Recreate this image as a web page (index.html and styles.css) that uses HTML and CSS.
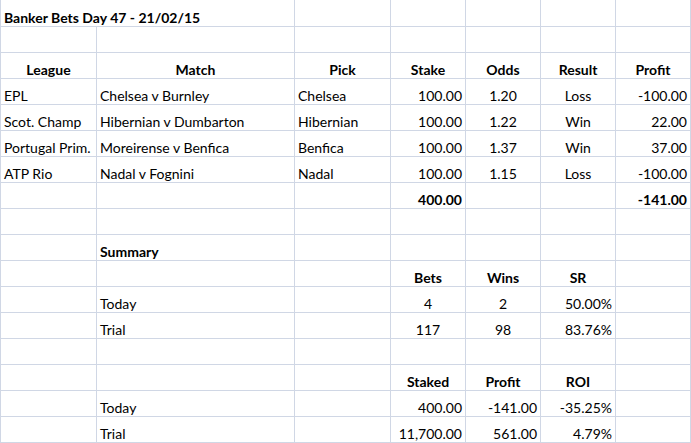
FILE: index.html
```html
<!DOCTYPE html>
<html>
<head>
<meta charset="utf-8">
<link rel="stylesheet" href="styles.css">
</head>
<body>
<div class="sheet">
  <div class="c b title">Banker Bets Day 47 - 21/02/15</div><div class="c"></div><div class="c"></div><div class="c"></div><div class="c"></div><div class="c"></div>

  <div class="c"></div><div class="c"></div><div class="c"></div><div class="c"></div><div class="c"></div><div class="c"></div><div class="c"></div>

  <div class="c b m">League</div><div class="c b m">Match</div><div class="c b m">Pick</div><div class="c b m">Stake</div><div class="c b m">Odds</div><div class="c b m">Result</div><div class="c b m">Profit</div>

  <div class="c">EPL</div><div class="c">Chelsea v Burnley</div><div class="c">Chelsea</div><div class="c r">100.00</div><div class="c m">1.20</div><div class="c m">Loss</div><div class="c r">-100.00</div>

  <div class="c">Scot. Champ</div><div class="c">Hibernian v Dumbarton</div><div class="c">Hibernian</div><div class="c r">100.00</div><div class="c m">1.22</div><div class="c m">Win</div><div class="c r">22.00</div>

  <div class="c">Portugal Prim.</div><div class="c">Moreirense v Benfica</div><div class="c">Benfica</div><div class="c r">100.00</div><div class="c m">1.37</div><div class="c m">Win</div><div class="c r">37.00</div>

  <div class="c">ATP Rio</div><div class="c">Nadal v Fognini</div><div class="c">Nadal</div><div class="c r">100.00</div><div class="c m">1.15</div><div class="c m">Loss</div><div class="c r">-100.00</div>

  <div class="c"></div><div class="c"></div><div class="c"></div><div class="c b r">400.00</div><div class="c"></div><div class="c"></div><div class="c b r">-141.00</div>

  <div class="c"></div><div class="c"></div><div class="c"></div><div class="c"></div><div class="c"></div><div class="c"></div><div class="c"></div>

  <div class="c"></div><div class="c b">Summary</div><div class="c"></div><div class="c"></div><div class="c"></div><div class="c"></div><div class="c"></div>

  <div class="c"></div><div class="c"></div><div class="c"></div><div class="c b m">Bets</div><div class="c b m">Wins</div><div class="c b m">SR</div><div class="c"></div>

  <div class="c"></div><div class="c">Today</div><div class="c"></div><div class="c m">4</div><div class="c m">2</div><div class="c r">50.00%</div><div class="c"></div>

  <div class="c"></div><div class="c">Trial</div><div class="c"></div><div class="c m">117</div><div class="c m">98</div><div class="c r">83.76%</div><div class="c"></div>

  <div class="c"></div><div class="c"></div><div class="c"></div><div class="c"></div><div class="c"></div><div class="c"></div><div class="c"></div>

  <div class="c"></div><div class="c"></div><div class="c"></div><div class="c b m">Staked</div><div class="c b m">Profit</div><div class="c b m">ROI</div><div class="c"></div>

  <div class="c"></div><div class="c">Today</div><div class="c"></div><div class="c r">400.00</div><div class="c r">-141.00</div><div class="c r">-35.25%</div><div class="c"></div>

  <div class="c"></div><div class="c">Trial</div><div class="c"></div><div class="c r">11,700.00</div><div class="c r">561.00</div><div class="c r">4.79%</div><div class="c"></div>
</div>
</body>
</html>
```

FILE: styles.css
```css
html, body {
  margin: 0;
  padding: 0;
  background: #ffffff;
}

.sheet {
  display: grid;
  grid-template-columns: 96px 198px 96px 75px 75px 75px 75px;
  grid-template-rows: 27px repeat(16, 26px);
  width: 691px;
  border-left: 1px solid #d0d7e5;
  box-sizing: border-box;
  font-family: Lato, "Liberation Sans", sans-serif;
  font-size: 14px;
  color: #000000;
}

.c {
  box-sizing: border-box;
  border-right: 1px solid #d0d7e5;
  border-bottom: 1px solid #d0d7e5;
  padding: 0 3px;
  display: flex;
  align-items: flex-end;
  justify-content: flex-start;
  white-space: nowrap;
  overflow: hidden;
}

.title {
  grid-column: span 2;
}

.b {
  font-weight: bold;
}

.r {
  justify-content: flex-end;
}

.m {
  justify-content: center;
}
```
